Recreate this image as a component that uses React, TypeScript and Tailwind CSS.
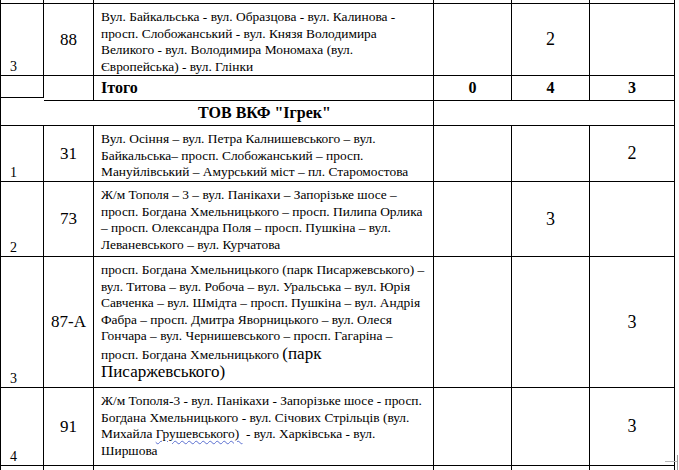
import React from 'react';

type Row = {
  idx: string;
  route: string;
  lines: React.ReactNode[];
  counts: [string, string, string];
  height: string;
};

const rows: Row[] = [
  {
    idx: '3',
    route: '88',
    height: 'h-[72px]',
    lines: [
      'Вул. Байкальська - вул. Образцова - вул. Калинова -',
      'просп. Слобожанський - вул. Князя Володимира',
      'Великого - вул. Володимира Мономаха (вул.',
      'Європейська) - вул. Глінки',
    ],
    counts: ['', '2', ''],
  },
];

const company: Row[] = [
  {
    idx: '1',
    route: '31',
    height: 'h-[56px]',
    lines: [
      'Вул. Осіння – вул. Петра Калнишевського – вул.',
      'Байкальська– просп. Слобожанський – просп.',
      'Мануйлівський – Амурський міст – пл. Старомостова',
    ],
    counts: ['', '', '2'],
  },
  {
    idx: '2',
    route: '73',
    height: 'h-[75px]',
    lines: [
      'Ж/м Тополя – 3 – вул. Панікахи – Запорізьке шосе –',
      'просп. Богдана Хмельницького – просп. Пилипа Орлика',
      '– просп. Олександра Поля – просп. Пушкіна – вул.',
      'Леваневського – вул. Курчатова',
    ],
    counts: ['', '3', ''],
  },
  {
    idx: '3',
    route: '87-А',
    height: 'h-[131px]',
    lines: [
      'просп. Богдана Хмельницького (парк Писаржевського) –',
      'вул. Титова – вул. Робоча – вул. Уральська – вул. Юрія',
      'Савченка – вул. Шмідта – просп. Пушкіна – вул. Андрія',
      'Фабра – просп. Дмитра Яворницького – вул. Олеся',
      'Гончара – вул. Чернишевського – просп. Гагаріна –',
      <>
        просп. Богдана Хмельницького <span className="text-[17px] leading-[17px]">(парк</span>
      </>,
      <span className="text-[17px] leading-[17px]">Писаржевського)</span>,
    ],
    counts: ['', '', '3'],
  },
  {
    idx: '4',
    route: '91',
    height: 'h-[78px]',
    lines: [
      'Ж/м Тополя-3 - вул. Панікахи - Запорізьке шосе - просп.',
      'Богдана Хмельницького - вул. Січових Стрільців (вул.',
      <>
        Михайла{' '}
        <span className="underline decoration-wavy decoration-[#5a6fd0] decoration-1 underline-offset-2">
          Грушевського)&nbsp;
        </span>{' '}
        - вул. Харківська - вул.
      </>,
      'Ширшова',
    ],
    counts: ['', '', '3'],
  },
];

const cell = 'border-r border-b border-black';

function DataRow({ row }: { row: Row }) {
  return (
    <>
      <div className={`${cell} ${row.height} flex items-end pl-[9px] pb-[1px] text-[14px] leading-[15px]`}>
        {row.idx}
      </div>
      <div className={`${cell} flex items-center justify-center text-[17px]`}>{row.route}</div>
      <div className={`${cell} pl-[7px] pt-[5px] text-[13.4px] leading-[16.5px] whitespace-nowrap`}>
        {row.lines.map((l, i) => (
          <div key={i}>{l}</div>
        ))}
      </div>
      {row.counts.map((c, i) => (
        <div key={i} className={`${cell} flex items-center justify-center text-[18px]`}>
          {c}
        </div>
      ))}
    </>
  );
}

export default function App() {
  return (
    <div className="relative w-[679px] h-[470px] overflow-hidden bg-white text-black font-[family-name:Liberation_Serif,Times_New_Roman,serif]">
      <div className="grid w-[675px] grid-cols-[43px_50px_340px_78px_78px_85px] border-l border-black">
        {/* верхній обрізаний рядок */}
        {Array.from({ length: 6 }).map((_, i) => (
          <div key={i} className={`${cell} h-[4px]`} />
        ))}

        {rows.map((r, i) => (
          <DataRow key={i} row={r} />
        ))}

        {/* Ітого */}
        <div className={`${cell} h-[22px]`} />
        <div className={cell} />
        <div className={`${cell} pl-[7px] flex items-center text-[16px] font-bold`}>Ітого</div>
        <div className={`${cell} flex items-center justify-center text-[16px] font-bold`}>0</div>
        <div className={`${cell} flex items-center justify-center text-[16px] font-bold`}>4</div>
        <div className={`${cell} flex items-center justify-center text-[16px] font-bold`}>3</div>

        {/* назва перевізника */}
        <div className={`${cell} col-span-3 h-[25px] pl-[95px] flex items-center justify-center text-[16px] font-bold`}>
          ТОВ ВКФ "Ігрек"
        </div>
        <div className={`${cell} col-span-3`} />

        {company.map((r, i) => (
          <DataRow key={i} row={r} />
        ))}

        {Array.from({ length: 6 }).map((_, i) => (
          <div key={i} className={`${cell} h-[20px]`} />
        ))}
      </div>

      {/* маркер зміни розміру таблиці */}
      <div className="absolute left-[665px] top-[461px] w-[12px] h-[1px] bg-[#b8b8b8]" />
      <div className="absolute left-[677px] top-[455px] w-[1px] h-[15px] bg-[#9a9a9a]" />
    </div>
  );
}
